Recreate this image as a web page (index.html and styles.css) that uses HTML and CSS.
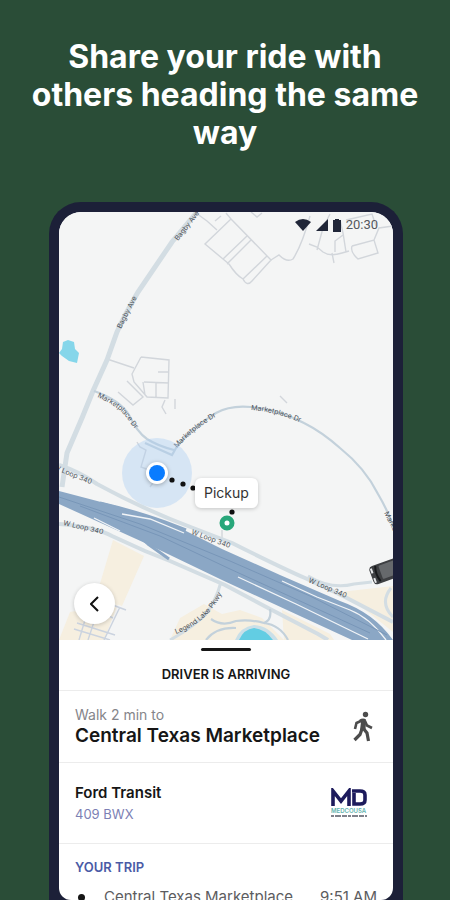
FILE: index.html
```
<!DOCTYPE html>
<html lang="en">
<head>
    <meta charset="utf-8">
    <meta name="viewport" content="width=device-width, initial-scale=1">
    <title>Share your ride</title>
    <link rel="stylesheet" href="styles.css">
</head>
<body>
    <h1 class="headline">Share your ride with others heading the same way</h1>

    <main class="phone">
        <div class="screen">
            <section class="map">
                <svg class="map-canvas" viewBox="59 212 334 428" preserveAspectRatio="xMidYMid slice" aria-label="Map">
                    <!-- land use -->
                    <g fill="#f6efe0">
                        <path d="M113 540L144 556L122 606L96 597Z"/>
                        <path d="M70 612L118 604L104 640H59Z"/>
                        <path d="M180 618L204 604L222 614L240 610L262 618L284 640H170Z"/>
                        <path d="M282 610L330 634L334 640H284Z"/>
                        <path d="M340 592L393 586V632L368 612Z"/>
                    </g>

                    <!-- water -->
                    <path fill="#85d6ea" d="M63 342L68 340L74 342L75 349L79 353L77 363L69 361L62 356L59 353L62 349Z"/>
                    <path fill="#c9dfe8" d="M235 640Q240 627 254 625Q269 626 278 640Z"/>
                    <path fill="#62cde3" d="M239 640Q244 629 254 628Q265 629 273 640Z"/>

                    <!-- small streets -->
                    <g fill="none" stroke="#d2d6db" stroke-width="1.4">
                        <path d="M196 213L207 221L217 230M226 213L231 219L205 244L223 259L229 264Q236 275 243 279Q247 287 252 281L271 260L231 219M223 259L247 236M227 264L251 240M243 279L267 256M215 221L221 216"/>
                        <path d="M271 260L279 255Q287 263 293 259Q302 245 310 216M251 212L257 217L262 213"/>
                        <path d="M309 244L317 247L323 252Q330 257 342 253L349 251M317 250L323 228L330 214M332 253L334 263M346 252L343 233L340 220M335 252V241L343 235M352 246L374 240L378 253L358 259Q350 252 352 246M374 240L379 228L393 226M376 226L372 214L346 220"/>
                        <path d="M107 359L134 368M141 357L169 360L168 398L147 397L134 382L132 374L141 357M144 382L169 383M156 383V398M158 372H168M127 381L143 397L133 405L118 392M143 382L145 395M165 400L162 407L166 414M175 399V409"/>
                        <path d="M137 442L140 447L146 450L141 467L149 470M150 487L155 480"/>
                        <path d="M222 530V538M280 396L287 403"/>
                        <path stroke="#cbd3df" d="M77 623L115 635M74 629L110 640M85 620L79 640M96 616L88 640M120 607L104 640M110 604L126 610M113 618L105 614"/>
                    </g>

                    <!-- secondary roads -->
                    <g fill="none" stroke="#d3dde3" stroke-width="4">
                        <path stroke-width="5" d="M197 212L172 242L138 292Q124 316 117 332L107 360L93 391L82 418L67 453L62 487"/>
                        <path d="M59 465Q80 472 97 484Q145 510 188 526L232 543Q280 567 305 578L345 597L393 622"/>
                        <path d="M59 524Q96 527 112 536L145 551L170 561L225 585L270 609L318 634L328 640"/>
                        <path stroke-width="3" d="M308 576Q331 590 354 584L372 582"/>
                        <path stroke-width="3" d="M391 588Q379 603 393 617"/>
                        <path stroke-width="3" d="M221 582Q216 601 205 615Q192 628 170 640"/>
                    </g>
                    <g fill="none" stroke="#c3d1db" stroke-width="2.2">
                        <path d="M94 391Q120 400 129 415Q137 432 147 439Q158 446 174 450"/>
                        <path d="M145 443L172 455L176 448Q191 428 216 413Q230 405 251 407Q280 410 304 423Q322 432 340 448Q365 468 378 494Q388 511 393 526"/>
                        <path d="M211 619Q222 627 236 621Q249 619 264 623Q272 620 270 609M264 623Q280 625 288 640M206 640Q216 627 236 628"/>
                    </g>

                    <!-- highway -->
                    <path fill="#8ba7c5" d="M59 491L120 507L178 527L222 549L280 575L340 601Q374 613 393 640H352L300 616L222 580L145 543L59 504Z"/>
                    <g fill="none" stroke="#8ba7c5" stroke-width="3">
                        <path d="M100 503Q138 512 165 522L186 530"/>
                        <path d="M92 513Q131 527 148 544L169 559"/>
                    </g>
                    <g fill="none" stroke="#f1f4f7" stroke-width="1.3">
                        <path d="M122 514L150 519L184 533"/>
                        <path d="M94 518L120 531M238 577L296 604L368 639"/>
                        <path d="M282 581L317 597L350 610Q370 618 386 640"/>
                    </g>
                    <g fill="none" stroke="#7896b8" stroke-width="1">
                        <path d="M59 497L140 524L230 561L310 596L387 635"/>
                        <path d="M80 506L160 536L230 569L370 633"/>
                    </g>

                    <!-- street names -->
                    <g class="street">
                        <text transform="translate(178 241) rotate(-52)">Bagby Ave</text>
                        <text transform="translate(121 329) rotate(-63)">Bagby Ave</text>
                        <path id="drive-west" fill="none" d="M97 397Q118 406 127 418Q133 428 143 437"/>
                        <text><textPath href="#drive-west">Marketplace Dr</textPath></text>
                        <path id="drive-mid" fill="none" d="M177 448Q194 428 226 411"/>
                        <text><textPath href="#drive-mid">Marketplace Dr</textPath></text>
                        <path id="drive-east" fill="none" d="M251 410Q280 412 310 427"/>
                        <text><textPath href="#drive-east">Marketplace Dr</textPath></text>
                        <text transform="translate(384 513) rotate(63)">Marketplace Dr</text>
                        <text transform="translate(53 469) rotate(22)">W Loop 340</text>
                        <text transform="translate(63 525) rotate(13)">W Loop 340</text>
                        <text transform="translate(191 534) rotate(20)">W Loop 340</text>
                        <text transform="translate(308 582) rotate(23)">W Loop 340</text>
                        <path id="parkway" fill="none" d="M176 634Q207 623 223 592"/>
                        <text><textPath href="#parkway">Legend Lake Pkwy</textPath></text>
                    </g>

                    <!-- rider position and walking route -->
                    <circle cx="157" cy="473" r="35" fill="#a9cdf3" fill-opacity=".4"/>
                    <circle class="lifted" cx="157" cy="473" r="11" fill="#fff"/>
                    <circle cx="157" cy="473" r="8" fill="#0a7cff"/>
                    <g fill="#111">
                        <circle cx="172" cy="480" r="2.6"/>
                        <circle cx="183" cy="484" r="2.6"/>
                        <circle cx="193" cy="488" r="2.6"/>
                        <circle cx="232" cy="512" r="2.6"/>
                    </g>
                    <circle cx="227" cy="523" r="5" fill="#fff" stroke="#28a77a" stroke-width="5"/>

                    <!-- vehicle -->
                    <g transform="translate(371 575) rotate(-20)">
                        <rect x="0" y="-8" width="34" height="19" rx="4" fill="#3d3f42"/>
                        <rect x="10" y="-6" width="25" height="14" rx="1" fill="#66696c"/>
                        <path d="M7 -7Q4 1 7 9" fill="none" stroke="#17191b" stroke-width="2"/>
                        <path d="M2 -6V-1M2 4V9" fill="none" stroke="#e6e8ea" stroke-width="2"/>
                    </g>
                </svg>

                <div class="status-bar">
                    <svg width="16" height="12" viewBox="0 0 16 12" fill="#202638" aria-hidden="true"><path d="M0 3Q8 -3 16 3L8 12Z"/></svg>
                    <svg width="12" height="12" viewBox="0 0 12 12" fill="#202638" aria-hidden="true"><path d="M0 12L12 0V12Z"/></svg>
                    <svg width="8" height="13" viewBox="0 0 8 13" fill="#202638" aria-hidden="true"><path d="M2 0H6V1H8V13H0V1H2Z"/></svg>
                    <span>20:30</span>
                </div>

                <span class="pickup">Pickup</span>

                <button class="back" type="button" aria-label="Back">
                    <svg width="10" height="16" viewBox="0 0 10 16" fill="none" stroke="#111" stroke-width="2"><path d="M8 1L1 8L8 15"/></svg>
                </button>
            </section>

            <section class="sheet">
                <div class="handle"></div>
                <h2 class="status">DRIVER IS ARRIVING</h2>

                <div class="row walk">
                    <div>
                        <p class="hint">Walk 2 min to</p>
                        <p class="place">Central Texas Marketplace</p>
                    </div>
                    <svg class="walk-icon" width="20" height="32" viewBox="0 0 20 32" fill="none" stroke="#4c4c4c" aria-hidden="true">
                        <circle cx="12.500" cy="3.500" r="2.700" fill="#4c4c4c" stroke="none"/>
                        <path fill="#4c4c4c" stroke="none" d="M6 9Q10 6.500 13 8.500L12.500 19L7 19L8 11Z"/>
                        <path stroke-width="2.6" d="M9 9.500L3.500 12L2 18M12 10L14 14.500L19 17"/>
                        <path stroke-width="3.200" d="M10 17L14 22L15.500 30M9 18L7 23.500L1.500 29"/>
                    </svg>
                </div>

                <div class="row vehicle">
                    <div>
                        <p class="model">Ford Transit</p>
                        <p class="plate">409 BWX</p>
                    </div>
                    <svg class="operator" width="38" height="30" viewBox="0 0 38 30" role="img" aria-label="Operator logo">
                        <path fill="none" stroke="#1d1b5c" stroke-width="3.600" d="M3 18V3L11 13L19 3V18"/>
                        <path fill="none" stroke="#1d1b5c" stroke-width="3.600" d="M24 5V16H30Q35 16 35 12V7Q35 3 30 3H22"/>
                        <text class="operator-name" x="1" y="25">MEDCOUSA</text>
                        <path stroke="#555a66" stroke-width="1.500" stroke-dasharray="3 1 6 1 5 1" d="M1 28H37"/>
                    </svg>
                </div>

                <div class="trip">
                    <h3 class="trip-title">YOUR TRIP</h3>
                    <div class="stop">
                        <span class="dot"></span>
                        <span class="stop-name">Central Texas Marketplace</span>
                        <time class="stop-time">9:51 AM</time>
                    </div>
                </div>
            </section>
        </div>
    </main>
</body>
</html>
```
FILE: styles.css
```
* {
    box-sizing: border-box;
}

body {
    display: flex;
    flex-direction: column;
    height: 100vh;
    margin: 0;
    overflow: hidden;
    background-color: #2a4d37;
    color: #161616;
    font-family: Inter, "Liberation Sans", sans-serif;
}

h1, h2, h3, p {
    margin: 0;
}

.headline {
    padding: 38px 24px 50px;
    color: #fff;
    font-size: 32px;
    font-weight: 700;
    line-height: 38px;
    text-align: center;
}

.phone {
    display: flex;
    flex: 1;
    min-height: 0;
    margin: 0 47px 0 49px;
    padding: 10px 10px 0;
    border-radius: 32px 32px 0 0;
    background-color: #1c2038;
}

.screen {
    flex: 1;
    min-width: 0;
    overflow: hidden;
    border-radius: 22px 22px 12px 12px;
    background-color: #fff;
}

/* Map */

.map {
    position: relative;
    background-color: #f4f5f5;
}

.map-canvas {
    display: block;
    width: 100%;
}

.street {
    fill: #4d5359;
    font-size: 7px;
}

.lifted {
    filter: drop-shadow(0 1px 2px rgba(0, 0, 0, 0.3));
}

.status-bar {
    position: absolute;
    top: 5px;
    right: 15px;
    display: flex;
    align-items: center;
    gap: 5px;
    color: #55585e;
    font-family: Roboto, sans-serif;
    font-size: 13px;
    line-height: 16px;
}

.pickup {
    position: absolute;
    top: 266px;
    left: 136px;
    padding: 5px 9px;
    border-radius: 6px;
    background-color: #fff;
    box-shadow: 0 1px 4px rgba(0, 0, 0, 0.2);
    color: #333;
    font-size: 14px;
    line-height: 20px;
}

.back {
    position: absolute;
    bottom: 16px;
    left: 15px;
    display: grid;
    place-items: center;
    width: 41px;
    height: 41px;
    padding: 0;
    border: none;
    border-radius: 50%;
    background-color: #fff;
    box-shadow: 0 1px 4px rgba(0, 0, 0, 0.2);
    cursor: pointer;
}

/* Bottom sheet */

.sheet {
    padding-top: 8px;
}

.handle {
    width: 50px;
    height: 3px;
    margin: 0 auto;
    border-radius: 2px;
    background-color: #161616;
}

.status {
    padding: 15px 0 7px;
    font-size: 13px;
    font-weight: 600;
    line-height: 17px;
    text-align: center;
}

.row {
    display: flex;
    align-items: center;
    justify-content: space-between;
    padding: 0 20px 0 16px;
    border-top: 1px solid #ececec;
}

.walk {
    height: 72px;
}

.hint {
    color: #85858a;
    font-size: 14px;
    line-height: 18px;
}

.place {
    font-size: 19px;
    font-weight: 600;
    line-height: 24px;
}

.vehicle {
    height: 81px;
    padding-right: 25px;
}

.model {
    font-size: 15px;
    font-weight: 600;
    line-height: 22px;
}

.plate {
    color: #7c80b4;
    font-size: 13px;
    line-height: 20px;
}

.operator-name {
    fill: #63b3ae;
    font-size: 6px;
    font-weight: 600;
}

.trip {
    padding: 14px 16px 0;
    border-top: 1px solid #ececec;
}

.trip-title {
    color: #4a5ba6;
    font-size: 13px;
    font-weight: 600;
    line-height: 18px;
}

.stop {
    display: flex;
    align-items: center;
    padding-top: 11px;
    color: #5c5c60;
    font-size: 15px;
    line-height: 20px;
}

.dot {
    width: 7px;
    height: 7px;
    margin: 0 19px 0 3px;
    border-radius: 50%;
    background-color: #161616;
}

.stop-time {
    margin-left: auto;
}
```
